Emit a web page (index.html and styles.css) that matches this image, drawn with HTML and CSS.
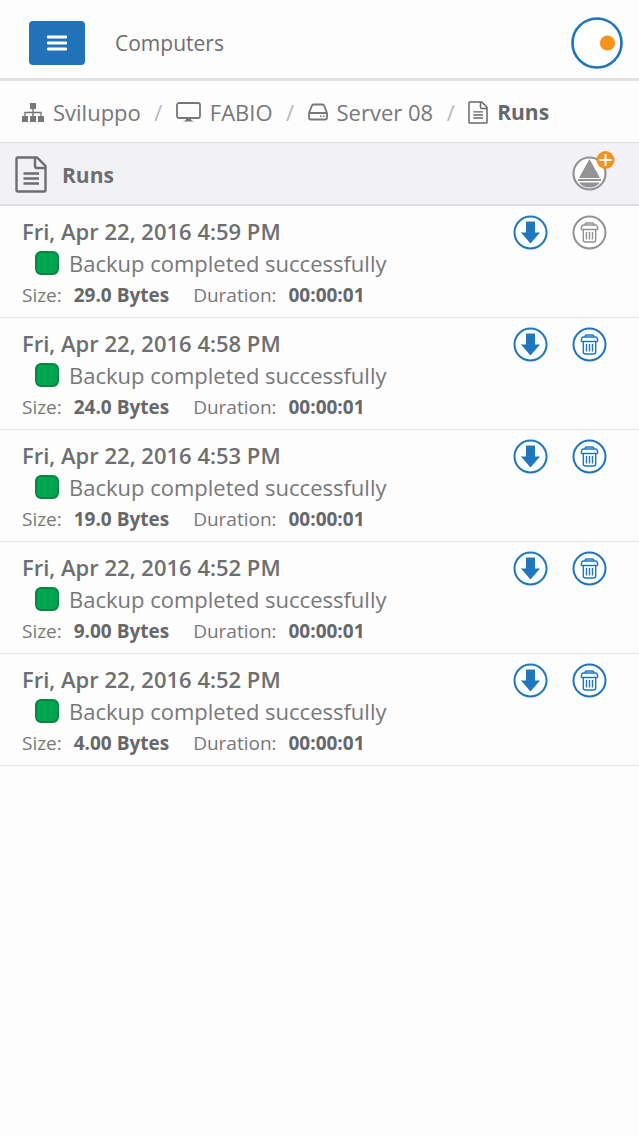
FILE: index.html
```html
<!DOCTYPE html>
<html lang="en">
<head>
    <meta charset="UTF-8">
    <meta name="viewport" content="width=device-width, initial-scale=1.0">
    <title>Runs</title>
    <link rel="stylesheet" href="styles.css">
</head>
<body>
    <svg class="symbols" aria-hidden="true">
        <symbol id="icon-doc" viewBox="0 0 32 37">
            <path d="M2 1.5H22L30.5 10V34Q30.5 35.5 29 35.5H3Q1.5 35.5 1.5 34V3Q1.5 1.5 3 1.5M20 2V10Q20 12 22 12H30M8.5 17.5H24M8.5 22.5H24M8.5 27.5H24" fill="none" stroke="currentColor" stroke-width="2.4"/>
        </symbol>
        <symbol id="icon-down" viewBox="0 0 35 35">
            <circle cx="17.5" cy="17.5" r="16" fill="#fff" stroke="currentColor" stroke-width="2"/>
            <path d="M13 6.5H22V17.5H27L17.5 28.5L8 17.5H13Z" fill="currentColor"/>
        </symbol>
        <symbol id="icon-trash" viewBox="0 0 35 35">
            <circle cx="17.5" cy="17.5" r="16" fill="#fff" stroke="currentColor" stroke-width="2"/>
            <g fill="none" stroke="currentColor" stroke-width="1.4">
                <path d="M13 9.5Q13 8 14.5 8H20.5Q22 8 22 9.5M11 10H24Q25.5 10.5 25.8 13.5Q25.8 14.5 25 14.5H10Q9.200 14.500 9.200 13.500Q9.500 10.500 11 10ZM11.300 14.500V25Q11.300 27 13.300 27H21.700Q23.700 27 23.700 25V14.500"/>
                <path d="M14.500 17V24.500M17.500 17V24.500M20.500 17V24.500"/>
            </g>
        </symbol>
    </svg>

    <header class="topbar">
        <button class="menu-button" type="button" aria-label="Menu">
            <svg width="20" height="16" viewBox="0 0 20 16"><path d="M1 2H19M1 8H19M1 14H19" stroke="#fff" stroke-width="2.8" stroke-linecap="round"/></svg>
        </button>
        <h1>Computers</h1>
        <svg class="activity" viewBox="0 0 52 52">
            <circle cx="26" cy="26" r="24.5" fill="#fff" stroke="#1b75bc" stroke-width="2.6"/>
            <circle cx="36.5" cy="26" r="7.6" fill="#f7921e"/>
        </svg>
    </header>

    <nav class="breadcrumb">
        <a href="#">
            <svg width="22" height="20" viewBox="0 0 22 20"><path d="M8 1H14V7H8ZM0 14H6V20H0ZM8 14H14V20H8ZM16 14H22V20H16Z" fill="currentColor"/><path d="M11 7V14M3 14V10.5H19V14" fill="none" stroke="currentColor" stroke-width="1.4"/></svg>
            Sviluppo
        </a>
        <span class="slash">/</span>
        <a href="#">
            <svg width="25" height="20" viewBox="0 0 25 20"><rect x="1" y="1" width="23" height="15" rx="2" fill="none" stroke="currentColor" stroke-width="1.8"/><path d="M10 16H15V18L18 19.500H7L10 18Z" fill="currentColor"/></svg>
            FABIO
        </a>
        <span class="slash">/</span>
        <a href="#">
            <svg width="20" height="18" viewBox="0 0 20 18"><path d="M1 10L4 2.5Q4.6 1.5 6 1.5H14Q15.4 1.5 16 2.5L19 10V14.5Q19 16.5 17 16.5H3Q1 16.5 1 14.5ZM1 10H19" fill="none" stroke="currentColor" stroke-width="1.8"/><path d="M12 13.3H13.5M15 13.3H16.5" stroke="currentColor" stroke-width="1.5"/></svg>
            Server 08
        </a>
        <span class="slash">/</span>
        <a class="current" href="#">
            <svg width="20" height="23"><use href="#icon-doc"/></svg>
            Runs
        </a>
    </nav>

    <section class="section-bar">
        <svg width="32" height="37"><use href="#icon-doc"/></svg>
        <h2>Runs</h2>
        <button class="icon-button" type="button" aria-label="Add run">
            <svg width="44" height="42" viewBox="0 0 44 42">
                <circle cx="17.5" cy="23.5" r="16" fill="#fff" stroke="#939396" stroke-width="2.2"/>
                <path d="M17.5 9L28 28H7ZM6 29H29V31H6ZM7 32.5H28Q24 37.5 17.5 37.5Q11 37.5 7 32.5Z" fill="#939396"/>
                <circle cx="33.5" cy="10" r="9" fill="#f7921e"/>
                <path d="M33.5 4V16M27.5 10H39.5" stroke="#fff" stroke-width="2"/>
            </svg>
        </button>
    </section>

    <main class="runs">
        <article class="run">
            <div class="run-info">
                <h3>Fri, Apr 22, 2016 4:59 PM</h3>
                <p class="status"><span class="ok"></span>Backup completed successfully</p>
                <p class="details"><span>Size: <b>29.0 Bytes</b></span><span>Duration: <b>00:00:01</b></span></p>
            </div>
            <div class="run-actions">
                <button class="icon-button" type="button" aria-label="Restore"><svg width="35" height="35"><use href="#icon-down"/></svg></button>
                <button class="icon-button" type="button" aria-label="Delete" disabled><svg width="35" height="35"><use href="#icon-trash"/></svg></button>
            </div>
        </article>
        <article class="run">
            <div class="run-info">
                <h3>Fri, Apr 22, 2016 4:58 PM</h3>
                <p class="status"><span class="ok"></span>Backup completed successfully</p>
                <p class="details"><span>Size: <b>24.0 Bytes</b></span><span>Duration: <b>00:00:01</b></span></p>
            </div>
            <div class="run-actions">
                <button class="icon-button" type="button" aria-label="Restore"><svg width="35" height="35"><use href="#icon-down"/></svg></button>
                <button class="icon-button" type="button" aria-label="Delete"><svg width="35" height="35"><use href="#icon-trash"/></svg></button>
            </div>
        </article>
        <article class="run">
            <div class="run-info">
                <h3>Fri, Apr 22, 2016 4:53 PM</h3>
                <p class="status"><span class="ok"></span>Backup completed successfully</p>
                <p class="details"><span>Size: <b>19.0 Bytes</b></span><span>Duration: <b>00:00:01</b></span></p>
            </div>
            <div class="run-actions">
                <button class="icon-button" type="button" aria-label="Restore"><svg width="35" height="35"><use href="#icon-down"/></svg></button>
                <button class="icon-button" type="button" aria-label="Delete"><svg width="35" height="35"><use href="#icon-trash"/></svg></button>
            </div>
        </article>
        <article class="run">
            <div class="run-info">
                <h3>Fri, Apr 22, 2016 4:52 PM</h3>
                <p class="status"><span class="ok"></span>Backup completed successfully</p>
                <p class="details"><span>Size: <b>9.00 Bytes</b></span><span>Duration: <b>00:00:01</b></span></p>
            </div>
            <div class="run-actions">
                <button class="icon-button" type="button" aria-label="Restore"><svg width="35" height="35"><use href="#icon-down"/></svg></button>
                <button class="icon-button" type="button" aria-label="Delete"><svg width="35" height="35"><use href="#icon-trash"/></svg></button>
            </div>
        </article>
        <article class="run">
            <div class="run-info">
                <h3>Fri, Apr 22, 2016 4:52 PM</h3>
                <p class="status"><span class="ok"></span>Backup completed successfully</p>
                <p class="details"><span>Size: <b>4.00 Bytes</b></span><span>Duration: <b>00:00:01</b></span></p>
            </div>
            <div class="run-actions">
                <button class="icon-button" type="button" aria-label="Restore"><svg width="35" height="35"><use href="#icon-down"/></svg></button>
                <button class="icon-button" type="button" aria-label="Delete"><svg width="35" height="35"><use href="#icon-trash"/></svg></button>
            </div>
        </article>
    </main>
</body>
</html>
```
FILE: styles.css
```css
* {
    box-sizing: border-box;
}
body {
    margin: 0;
    font-family: "Open Sans", sans-serif;
    font-size: 22px;
    line-height: 32px;
    color: #77777a;
    background-color: #fdfdfd;
}
h1, h2, h3, p {
    margin: 0;
}
h1, h2, h3 {
    color: #6d6e70;
}
svg {
    display: block;
    flex-shrink: 0;
}
.symbols {
    display: none;
}
.topbar {
    display: flex;
    align-items: center;
    padding: 17px 16px 9px 29px;
    border-bottom: 3px solid #dfe3e5;
}
.topbar h1 {
    flex: 1;
    margin-left: 30px;
    font-size: 21px;
    font-weight: 500;
}
.menu-button {
    display: flex;
    justify-content: center;
    align-items: center;
    width: 56px;
    height: 44px;
    padding: 0;
    background: #2272b9;
    border: none;
    border-radius: 4px;
    cursor: pointer;
}
.activity {
    width: 52px;
    height: 52px;
}
.breadcrumb {
    display: flex;
    align-items: center;
    padding: 15px 22px 14px;
}
.breadcrumb a {
    display: flex;
    align-items: center;
    gap: 9px;
    color: #77777a;
    text-decoration: none;
}
.breadcrumb .current {
    color: #66676a;
    font-size: 21px;
    font-weight: 700;
}
.slash {
    width: 35px;
    text-align: center;
    color: #b9b9bc;
}
.section-bar {
    display: flex;
    align-items: center;
    padding: 5px 23px 11px 15px;
    color: #6d6e70;
    background: #f2f1f5;
    border-top: 1px solid #dedde1;
    border-bottom: 2px solid #dedde1;
}
.section-bar > svg,
.section-bar h2 {
    margin-top: 8px;
}
.section-bar h2 {
    flex: 1;
    margin-left: 15px;
    font-size: 21px;
    font-weight: 700;
}
.icon-button {
    padding: 0;
    color: #1f76bd;
    background: none;
    border: none;
    cursor: pointer;
}
.icon-button:disabled {
    color: #939396;
    cursor: default;
}
.run {
    display: flex;
    justify-content: space-between;
    padding: 9px 32px 6px 22px;
    border-bottom: 1px solid #e6e5ea;
}
.run h3 {
    font-size: 22px;
    font-weight: 600;
}
.status {
    display: flex;
    align-items: center;
    padding-left: 13px;
}
.ok {
    width: 24px;
    height: 24px;
    margin-right: 10px;
    background: #00a551;
    border: 2px solid #078541;
    border-radius: 6px;
}
.details {
    display: flex;
    gap: 24px;
    font-size: 19px;
}
.details b {
    margin-left: 7px;
    color: #66676a;
}
.run-actions {
    display: flex;
    align-items: flex-start;
    gap: 24px;
}
```
